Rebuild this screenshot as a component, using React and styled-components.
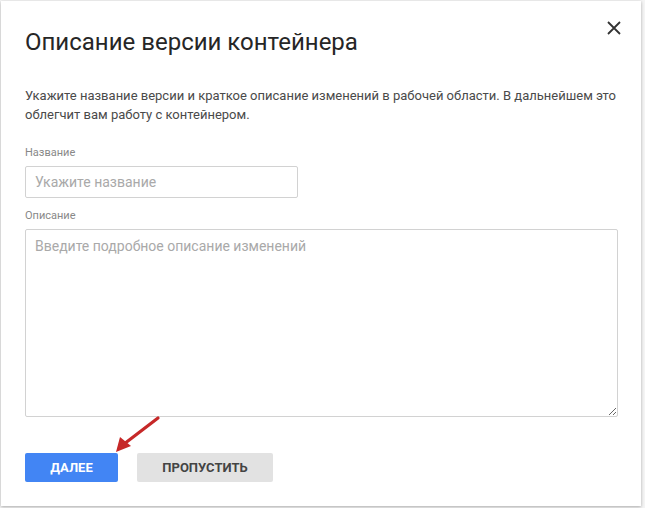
import styled, { createGlobalStyle } from "styled-components";

const GlobalStyle = createGlobalStyle`
  html, body {
    margin: 0;
    padding: 0;
    background: #f4f4f4;
    font-family: Roboto, "Noto Sans", Arial, sans-serif;
  }
`;

const Page = styled.div`
  width: 645px;
  height: 508px;
  padding: 1px 0 0 1px;
  box-sizing: border-box;
  position: relative;
  overflow: hidden;
`;

const Dialog = styled.div`
  position: relative;
  width: 640px;
  height: 505px;
  box-sizing: border-box;
  background: #fff;
  box-shadow: 0 1px 3px rgba(0, 0, 0, 0.3);
  padding: 26px 24px 0 24px;
`;

const Title = styled.h1`
  margin: 0;
  font-size: 24px;
  line-height: 30px;
  font-weight: 400;
  color: #262626;
`;

const Close = styled.button`
  position: absolute;
  top: 17px;
  right: 17px;
  width: 20px;
  height: 20px;
  padding: 0;
  border: 0;
  background: none;
  cursor: pointer;
  display: flex;
  align-items: center;
  justify-content: center;
`;

const Intro = styled.p`
  margin: 29px 0 0;
  font-size: 13px;
  line-height: 19px;
  color: #4a4a4a;
`;

const Label = styled.label`
  display: block;
  margin-top: ${(p) => p.$top}px;
  font-size: 11px;
  line-height: 14px;
  color: #888;
`;

const Input = styled.input`
  display: block;
  box-sizing: border-box;
  margin-top: 6px;
  width: 273px;
  height: 32px;
  padding: 0 9px;
  border: 1px solid #d2d2d2;
  border-radius: 2px;
  font-family: inherit;
  font-size: 14px;
  color: #333;
  &::placeholder {
    color: #a9a9a9;
  }
`;

const Area = styled.textarea`
  display: block;
  box-sizing: border-box;
  margin-top: 6px;
  width: 593px;
  height: 188px;
  padding: 7px 9px;
  border: 1px solid #d2d2d2;
  border-radius: 2px;
  font-family: inherit;
  font-size: 14px;
  line-height: 18px;
  color: #333;
  resize: vertical;
  &::placeholder {
    color: #a9a9a9;
  }
`;

const Actions = styled.div`
  display: flex;
  gap: 19px;
  margin-top: 36px;
`;

const Button = styled.button`
  height: 29px;
  min-width: ${(p) => p.$width}px;
  border: 0;
  border-radius: 2px;
  font-family: inherit;
  font-size: 13px;
  font-weight: 700;
  background: ${(p) => (p.$primary ? "#4285f4" : "#e2e2e2")};
  color: ${(p) => (p.$primary ? "#fff" : "#444")};
  cursor: pointer;
`;

const Arrow = styled.svg`
  position: absolute;
  left: 110px;
  top: 412px;
`;

export default function App() {
  return (
    <>
      <GlobalStyle />
      <Page>
        <Dialog>
          <Title>Описание версии контейнера</Title>
          <Close aria-label="Закрыть">
            <svg width="14" height="14" viewBox="0 0 14 14">
              <path d="M1 1 L13 13 M13 1 L1 13" stroke="#333" strokeWidth="1.8" />
            </svg>
          </Close>
          <Intro>
            Укажите название версии и краткое описание изменений в рабочей области. В дальнейшем это
            облегчит вам работу с контейнером.
          </Intro>
          <Label $top={22}>Название</Label>
          <Input placeholder="Укажите название" />
          <Label $top={11}>Описание</Label>
          <Area placeholder="Введите подробное описание изменений" />
          <Actions>
            <Button $primary $width={93}>ДАЛЕЕ</Button>
            <Button $width={136}>ПРОПУСТИТЬ</Button>
          </Actions>
        </Dialog>
        <Arrow width="56" height="46" viewBox="0 0 56 46">
          <path d="M48 6 L14 32" stroke="#c62828" strokeWidth="3.2" strokeLinecap="round" />
          <path d="M6 40 L10 25 L21 34 Z" fill="#c62828" />
        </Arrow>
      </Page>
    </>
  );
}
